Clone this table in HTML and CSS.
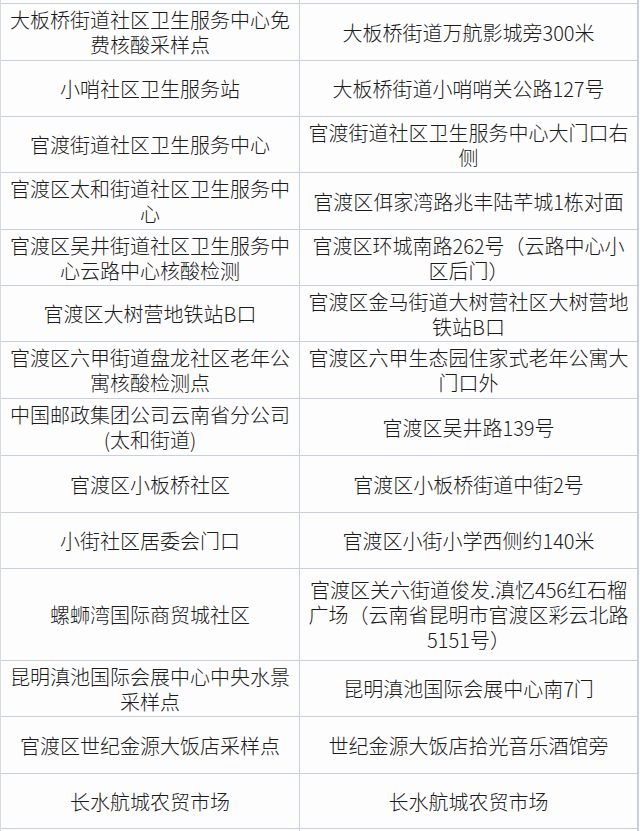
FILE: index.html
```html
<!DOCTYPE html>
<html lang="zh-CN">
<head>
<meta charset="utf-8">
<title>核酸采样点</title>
<link rel="stylesheet" href="styles.css">
</head>
<body>
<div class="sheet">
  <div class="cell"></div><div class="cell"></div>
  <div class="cell">大板桥街道社区卫生服务中心免费核酸采样点</div><div class="cell">大板桥街道万航影城旁300米</div>
  <div class="cell">小哨社区卫生服务站</div><div class="cell">大板桥街道小哨哨关公路127号</div>
  <div class="cell">官渡街道社区卫生服务中心</div><div class="cell">官渡街道社区卫生服务中心大门口右侧</div>
  <div class="cell">官渡区太和街道社区卫生服务中心</div><div class="cell">官渡区佴家湾路兆丰陆芊城1栋对面</div>
  <div class="cell">官渡区吴井街道社区卫生服务中心云路中心核酸检测</div><div class="cell">官渡区环城南路262号（云路中心小区后门）</div>
  <div class="cell">官渡区大树营地铁站B口</div><div class="cell">官渡区金马街道大树营社区大树营地铁站B口</div>
  <div class="cell">官渡区六甲街道盘龙社区老年公寓核酸检测点</div><div class="cell">官渡区六甲生态园住家式老年公寓大门口外</div>
  <div class="cell">中国邮政集团公司云南省分公司(太和街道)</div><div class="cell">官渡区吴井路139号</div>
  <div class="cell">官渡区小板桥社区</div><div class="cell">官渡区小板桥街道中街2号</div>
  <div class="cell">小街社区居委会门口</div><div class="cell">官渡区小街小学西侧约140米</div>
  <div class="cell">螺蛳湾国际商贸城社区</div><div class="cell">官渡区关六街道俊发.滇忆456红石榴广场（云南省昆明市官渡区彩云北路5151号）</div>
  <div class="cell">昆明滇池国际会展中心中央水景采样点</div><div class="cell">昆明滇池国际会展中心南7门</div>
  <div class="cell">官渡区世纪金源大饭店采样点</div><div class="cell">世纪金源大饭店拾光音乐酒馆旁</div>
  <div class="cell">长水航城农贸市场</div><div class="cell">长水航城农贸市场</div>
  <div class="cell"></div><div class="cell"></div>
</div>
</body>
</html>
```
FILE: styles.css
```css
html, body {
  margin: 0;
  padding: 0;
  background: #ffffff;
}

.sheet {
  display: grid;
  grid-template-columns: 298px 337px;
  grid-template-rows: 3px 56px 55px 55px 56px 55px 55px 56px 56px 56px 55px 91px 55px 56px 54px 3px;
  gap: 1px;
  width: 637px;
  background: #c9d0db;
  border-left: 1px solid #d6dbe3;
  border-right: 1px solid #c9d0db;
  box-sizing: content-box;
  overflow: hidden;
  height: 831px;
}

.cell {
  background: #fdfdfe;
  display: flex;
  align-items: center;
  justify-content: center;
  text-align: center;
  padding: 0 3px;
  font-family: "Noto Sans CJK SC", sans-serif;
  font-size: 20px;
  font-weight: 300;
  line-height: 25px;
  color: #1a1a1a;
  overflow: hidden;
}
```
